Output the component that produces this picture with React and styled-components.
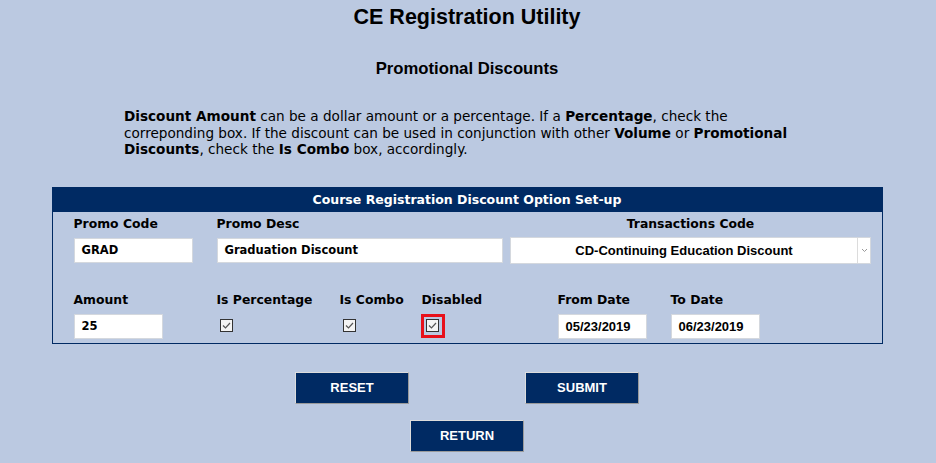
import React from "react";
import styled, { createGlobalStyle } from "styled-components";

const GlobalStyle = createGlobalStyle`
    html, body {
        margin: 0;
        padding: 0;
        background: #bbc9e1;
    }
    body {
        font-family: "Liberation Sans", Arial, sans-serif;
        color: #000;
    }
`;

const Page = styled.div`
    width: 934px;
    min-height: 463px;
    background: #bbc9e1;
    display: flex;
    flex-direction: column;
    align-items: center;
`;

const Title = styled.h1`
    margin: 6px 0 0;
    font-size: 21.5px;
    line-height: 22px;
    font-weight: bold;
`;

const SubTitle = styled.h2`
    margin: 32px 0 0;
    font-size: 16.7px;
    line-height: 18px;
    font-weight: bold;
`;

const Intro = styled.p`
    margin: 30px 0 0;
    width: 686px;
    font-family: "DejaVu Sans", Verdana, sans-serif;
    font-size: 13.6px;
    line-height: 16.5px;
    b {
        font-weight: bold;
    }
`;

const Panel = styled.div`
    margin-top: 29px;
    width: 829px;
    border: 1px solid #002a63;
`;

const PanelHeader = styled.div`
    background: #002a63;
    color: #fff;
    font-family: "DejaVu Sans", Verdana, sans-serif;
    font-weight: bold;
    font-size: 12.5px;
    height: 24px;
    line-height: 23px;
    text-align: center;
`;

const FieldGrid = styled.div`
    display: grid;
    grid-template-columns: 143px 123px 82px 88px 48px 113px 1fr;
    row-gap: 28px;
    padding: 4px 10px 4px 21px;
`;

const Field = styled.div`
    display: flex;
    flex-direction: column;
    gap: 6px;
    grid-column: ${(p) => p.span || "auto"};
    align-items: ${(p) => (p.center ? "center" : "stretch")};
`;

const Label = styled.label`
    font-family: "DejaVu Sans", Verdana, sans-serif;
    font-weight: bold;
    font-size: 12.4px;
    line-height: 16px;
    white-space: nowrap;
`;

const TextBox = styled.div`
    box-sizing: border-box;
    width: ${(p) => p.w}px;
    height: 25px;
    background: #fff;
    border: 1px solid #d4d8de;
    padding-left: 7px;
    display: flex;
    align-items: center;
    font-family: ${(p) =>
        p.arial
            ? '"Liberation Sans", Arial, sans-serif'
            : '"DejaVu Sans", Verdana, sans-serif'};
    font-weight: bold;
    font-size: ${(p) => (p.arial ? 13 : 11.5)}px;
    white-space: nowrap;
`;

const Select = styled.div`
    box-sizing: border-box;
    width: 361px;
    height: 27px;
    margin-top: -1px;
    background: #fff;
    border: 1px solid #d4d8de;
    display: flex;
    align-items: stretch;
`;

const SelectText = styled.div`
    flex: 1;
    display: flex;
    align-items: center;
    justify-content: center;
    font-weight: bold;
    font-size: 13px;
`;

const SelectArrow = styled.div`
    width: 12px;
    border-left: 1px solid #dcdcdc;
    display: flex;
    align-items: center;
    justify-content: center;
`;

const CheckCell = styled.div`
    height: 24px;
    display: flex;
    align-items: center;
`;

const CheckFrame = styled.div`
    box-sizing: border-box;
    width: 24px;
    height: 24px;
    margin-left: ${(p) => (p.outlined ? -1 : 3)}px;
    border: ${(p) => (p.outlined ? "3px solid #e8101a" : "none")};
    display: flex;
    align-items: center;
    justify-content: ${(p) => (p.outlined ? "center" : "flex-start")};
`;

const Box = styled.span`
    box-sizing: border-box;
    width: 13px;
    height: 13px;
    border: 1px solid #333;
    background: #f4f4f4;
    display: inline-flex;
    align-items: center;
    justify-content: center;
`;

const ButtonArea = styled.div`
    margin-top: 28px;
    display: flex;
    flex-direction: column;
    align-items: center;
    gap: 16px;
`;

const ButtonRow = styled.div`
    display: flex;
    gap: 116px;
`;

const Button = styled.button`
    box-sizing: border-box;
    width: 114px;
    height: 32px;
    background: #002a63;
    color: #fff;
    font-family: "Liberation Sans", Arial, sans-serif;
    font-weight: bold;
    font-size: 13px;
    border: 1px solid;
    border-color: #dcdcdc #9a9a9a #9a9a9a #dcdcdc;
    cursor: pointer;
`;

const Check = ({ outlined }) => (
    <CheckCell>
        <CheckFrame outlined={outlined}>
            <Box>
                <svg width="11" height="11" viewBox="0 0 11 11">
                    <path d="M2 5.5 L4.5 8 L9 3" fill="none" stroke="#555" strokeWidth="1.2" />
                </svg>
            </Box>
        </CheckFrame>
    </CheckCell>
);

const App = () => {
    return (
        <>
            <GlobalStyle />
            <Page>
                <Title>CE Registration Utility</Title>
                <SubTitle>Promotional Discounts</SubTitle>
                <Intro>
                    <b>Discount Amount</b> can be a dollar amount or a percentage. If a{" "}
                    <b>Percentage</b>, check the correponding box. If the discount can be used in
                    conjunction with other <b>Volume</b> or <b>Promotional Discounts</b>, check the{" "}
                    <b>Is Combo</b> box, accordingly.
                </Intro>

                <Panel>
                    <PanelHeader>Course Registration Discount Option Set-up</PanelHeader>
                    <FieldGrid>
                        <Field>
                            <Label>Promo Code</Label>
                            <TextBox w={119}>GRAD</TextBox>
                        </Field>
                        <Field span="2 / span 3">
                            <Label>Promo Desc</Label>
                            <TextBox w={286}>Graduation Discount</TextBox>
                        </Field>
                        <Field span="5 / span 3" center>
                            <Label>Transactions Code</Label>
                            <Select>
                                <SelectText>CD-Continuing Education Discount</SelectText>
                                <SelectArrow>
                                    <svg width="7" height="5" viewBox="0 0 7 5">
                                        <path d="M1 1 L3.5 3.5 L6 1" fill="none" stroke="#999" strokeWidth="1" />
                                    </svg>
                                </SelectArrow>
                            </Select>
                        </Field>

                        <Field>
                            <Label>Amount</Label>
                            <TextBox w={89}>25</TextBox>
                        </Field>
                        <Field>
                            <Label>Is Percentage</Label>
                            <Check />
                        </Field>
                        <Field>
                            <Label>Is Combo</Label>
                            <Check />
                        </Field>
                        <Field>
                            <Label>Disabled</Label>
                            <Check outlined />
                        </Field>
                        <Field span="6">
                            <Label>From Date</Label>
                            <TextBox w={89} arial>05/23/2019</TextBox>
                        </Field>
                        <Field span="7">
                            <Label>To Date</Label>
                            <TextBox w={89} arial>06/23/2019</TextBox>
                        </Field>
                    </FieldGrid>
                </Panel>

                <ButtonArea>
                    <ButtonRow>
                        <Button>RESET</Button>
                        <Button>SUBMIT</Button>
                    </ButtonRow>
                    <Button>RETURN</Button>
                </ButtonArea>
            </Page>
        </>
    );
};

export default App;
